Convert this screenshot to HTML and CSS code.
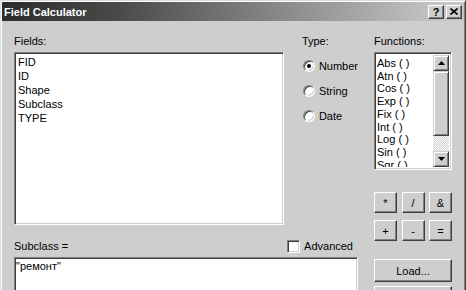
FILE: index.html
```html
<!DOCTYPE html>
<html lang="en">
<head>
    <meta charset="UTF-8">
    <title>Field Calculator</title>
    <link rel="stylesheet" href="styles.css">
</head>
<body>
<div class="window">
    <div class="titlebar">
        <span class="title">Field Calculator</span>
        <div class="caption-btns">
            <span class="cap-btn help">?</span>
            <span class="cap-btn close">
                <svg width="8" height="7" viewBox="0 0 8 7"><path d="M0.5 0.5 L7.5 6.5 M7.5 0.5 L0.5 6.5" stroke="#000" stroke-width="1.6"/></svg>
            </span>
        </div>
    </div>
    <div class="client">
        <div class="main">
            <div class="top">
                <div class="fields-col">
                    <div class="label">Fields:</div>
                    <div class="listbox fields">
                        <div>FID</div>
                        <div>ID</div>
                        <div>Shape</div>
                        <div>Subclass</div>
                        <div>TYPE</div>
                    </div>
                </div>
                <div class="type-col">
                    <div class="label">Type:</div>
                    <div class="radios">
                        <div class="radio checked"><span class="dot"></span>Number</div>
                        <div class="radio"><span class="dot"></span>String</div>
                        <div class="radio"><span class="dot"></span>Date</div>
                    </div>
                </div>
            </div>
            <div class="expr-head">
                <span>Subclass =</span>
                <span class="check"><span class="box"></span>Advanced</span>
            </div>
            <div class="expr">"ремонт"</div>
        </div>
        <div class="side">
            <div class="label">Functions:</div>
            <div class="listbox funcs">
                <div class="items">
                    <div>Abs ( )</div>
                    <div>Atn ( )</div>
                    <div>Cos ( )</div>
                    <div>Exp ( )</div>
                    <div>Fix ( )</div>
                    <div>Int ( )</div>
                    <div>Log ( )</div>
                    <div>Sin ( )</div>
                    <div>Sqr ( )</div>
                </div>
                <div class="scrollbar">
                    <span class="sb-btn"><svg width="7" height="4" viewBox="0 0 7 4"><path d="M3.5 0 L7 4 L0 4 Z" fill="#000"/></svg></span>
                    <span class="sb-thumb"></span>
                    <span class="sb-track"></span>
                    <span class="sb-btn"><svg width="7" height="4" viewBox="0 0 7 4"><path d="M0 0 L7 0 L3.5 4 Z" fill="#000"/></svg></span>
                </div>
            </div>
            <div class="ops">
                <span class="btn">*</span>
                <span class="btn">/</span>
                <span class="btn">&amp;</span>
                <span class="btn">+</span>
                <span class="btn">-</span>
                <span class="btn">=</span>
            </div>
            <span class="btn wide load">Load...</span>
            <span class="btn wide"></span>
        </div>
    </div>
</div>
</body>
</html>
```

FILE: styles.css
```css
*{
    margin: 0;
    padding: 0;
    box-sizing: border-box;
}
html, body{
    overflow: hidden;
}
body{
    font-family: "Liberation Sans", Arial, sans-serif;
    font-size: 11px;
    color: #000;
    background: #cecece;
}
.window{
    width: 466px;
    height: 320px;
    background: #cecece;
    border: 1px solid;
    border-color: #dcdcdc #404040 #404040 #dcdcdc;
    box-shadow: inset 1px 1px #fff, inset -1px -1px #808080;
    padding: 1px;
}
.titlebar{
    height: 19px;
    display: flex;
    align-items: center;
    padding: 0 2px;
    background: linear-gradient(to right, #2c2c2c, #4a4a4a 25%, #c6c6c6 95%);
    color: #fff;
}
.title{
    font-weight: bold;
    padding-top: 1px;
}
.caption-btns{
    margin-left: auto;
    display: flex;
    gap: 2px;
}
.cap-btn{
    width: 16px;
    height: 14px;
    display: flex;
    align-items: center;
    justify-content: center;
    background: #cecece;
    border: 1px solid;
    border-color: #fff #404040 #404040 #fff;
    box-shadow: inset -1px -1px #808080;
    color: #000;
    font-weight: bold;
}
.client{
    display: flex;
    gap: 16px;
    padding: 14px 12px 0 12px;
}
.main{
    width: 344px;
}
.top{
    display: flex;
    gap: 18px;
}
.fields-col{
    width: 274px;
}
.label{
    height: 13px;
    line-height: 13px;
    margin-bottom: 4px;
}
.listbox{
    background: #fff;
    border: 1px solid;
    border-color: #808080 #fff #fff #808080;
    box-shadow: inset 1px 1px #404040, inset -1px -1px #cecece;
}
.fields{
    height: 173px;
    padding: 2px 3px;
    line-height: 14px;
}
.type-col{
    flex: 1;
}
.radios{
    margin-top: 10px;
    display: flex;
    flex-direction: column;
    gap: 9px;
}
.radio{
    height: 16px;
    display: flex;
    align-items: center;
    gap: 4px;
    padding-left: 1px;
}
.dot{
    width: 12px;
    height: 12px;
    border-radius: 50%;
    background: #fff;
    border: 1px solid;
    border-color: #808080 #fff #fff #808080;
    box-shadow: inset 1px 1px #404040, inset -1px -1px #cecece;
    display: flex;
    align-items: center;
    justify-content: center;
}
.radio.checked .dot::after{
    content: "";
    width: 4px;
    height: 4px;
    border-radius: 50%;
    background: #000;
}
.expr-head{
    margin-top: 15px;
    height: 13px;
    display: flex;
    align-items: center;
    line-height: 13px;
}
.check{
    margin-left: auto;
    margin-right: 5px;
    display: flex;
    align-items: center;
    gap: 4px;
}
.box{
    width: 13px;
    height: 13px;
    background: #fff;
    border: 1px solid;
    border-color: #808080 #fff #fff #808080;
    box-shadow: inset 1px 1px #404040, inset -1px -1px #cecece;
}
.expr{
    margin-top: 4px;
    height: 60px;
    background: #fff;
    border: 1px solid;
    border-color: #808080 #fff #fff #808080;
    box-shadow: inset 1px 1px #404040, inset -1px -1px #cecece;
    padding: 2px 2px 0 1px;
    line-height: 13px;
}
.side{
    width: 80px;
    display: flex;
    flex-direction: column;
}
.funcs{
    height: 118px;
    display: flex;
    padding: 2px;
    overflow: hidden;
}
.items{
    flex: 1;
    padding-top: 2px;
    line-height: 12.7px;
    overflow: hidden;
}
.scrollbar{
    width: 16px;
    display: flex;
    flex-direction: column;
}
.sb-btn{
    height: 16px;
    display: flex;
    align-items: center;
    justify-content: center;
    background: #cecece;
    border: 1px solid;
    border-color: #cecece #404040 #404040 #cecece;
    box-shadow: inset 1px 1px #fff, inset -1px -1px #808080;
}
.sb-thumb{
    height: 65px;
    background: #cecece;
    border: 1px solid;
    border-color: #cecece #404040 #404040 #cecece;
    box-shadow: inset 1px 1px #fff, inset -1px -1px #808080;
}
.sb-track{
    flex: 1;
    background: repeating-conic-gradient(#fff 0 25%, #cecece 0 50%);
    background-size: 2px 2px;
}
.ops{
    margin-top: 22px;
    display: grid;
    grid-template-columns: repeat(3, 23px);
    grid-auto-rows: 21px;
    justify-content: space-between;
    row-gap: 7px;
}
.btn{
    display: flex;
    align-items: center;
    justify-content: center;
    background: #cecece;
    border: 1px solid;
    border-color: #fff #404040 #404040 #fff;
    box-shadow: inset -1px -1px #808080;
}
.wide{
    height: 23px;
}
.load{
    margin-top: 18px;
    margin-bottom: 4px;
}
```
